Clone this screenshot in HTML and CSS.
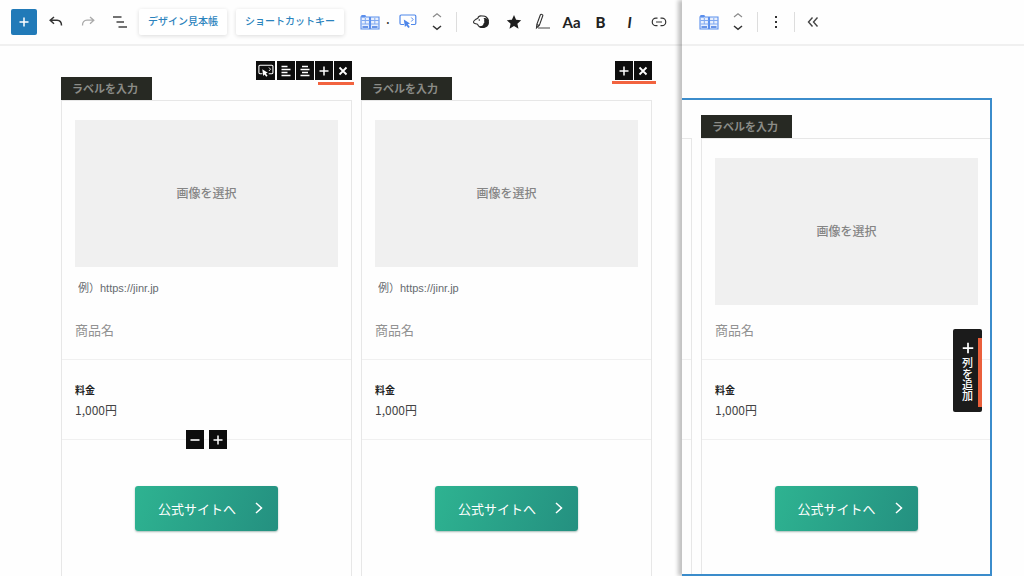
FILE: index.html
```html
<!DOCTYPE html>
<html lang="ja">
<head>
<meta charset="utf-8">
<title>比較表ブロック</title>
<link rel="stylesheet" href="styles.css">
</head>
<body>
<svg class="sprite" aria-hidden="true">
  <symbol id="i-table" viewBox="0 0 20 16"><path d="M1 15V3l1-1.500h3L6 3h3.500v12zM10.500 15V3H19v12z" fill="#e9f0fd" stroke="#5b8fec" stroke-width="1.100"/><path d="M1.500 2h3.800v1.600H1.500z" fill="#5b8fec"/><path d="M1.500 6.500h8M1.500 10h8M11 6.500h8M11 10h8M5.300 4v6M14.800 4v6" fill="none" stroke="#7fa8f1" stroke-width="1"/><path d="M2.500 13h5.500M12 13h5.500" fill="none" stroke="#3f76df" stroke-width="1.500"/></symbol>
  <symbol id="i-click" viewBox="0 0 18 15"><path d="M5 10.500H2.200A1.200 1.200 0 0 1 1 9.300V2.200A1.200 1.200 0 0 1 2.200 1h13.400a1.200 1.200 0 0 1 1.200 1.200v7.100a1.200 1.200 0 0 1-1.200 1.200H12" fill="none" stroke="currentColor" stroke-width="1.200"/><path d="M12.300 3.500l1.800 2-1.800 2" fill="none" stroke="currentColor"/><path d="M4.800 5.500l6.200 4-2.200.8 2 2.600-1.500 1.100-1.900-2.600-1.500 1.700z" class="pointer"/></symbol>
  <symbol id="i-mover" viewBox="0 0 12 20"><path d="M2 5l4-3.300L10 5" fill="none" stroke="#8b8b8b" stroke-width="1.200"/><path d="M2 14l4 3.300 4-3.300" fill="none" stroke="#333" stroke-width="1.500"/></symbol>
  <symbol id="i-plus" viewBox="0 0 12 12"><path d="M6 1.500v9M1.500 6h9" fill="none" stroke="currentColor" stroke-width="1.500"/></symbol>
  <symbol id="i-minus" viewBox="0 0 12 12"><path d="M1.500 6h9" fill="none" stroke="currentColor" stroke-width="1.600"/></symbol>
  <symbol id="i-close" viewBox="0 0 12 12"><path d="M2.500 2.500l7 7M9.500 2.500l-7 7" fill="none" stroke="currentColor" stroke-width="1.800"/></symbol>
  <symbol id="i-left" viewBox="0 0 12 12"><path d="M1.500 1.500h6M1.500 4.500h9M1.500 7.500h6M1.500 10.500h9" fill="none" stroke="currentColor" stroke-width="1.300"/></symbol>
  <symbol id="i-center" viewBox="0 0 12 12"><path d="M3 1.500h6M1.500 4.500h9M3 7.500h6M1.500 10.500h9" fill="none" stroke="currentColor" stroke-width="1.300"/></symbol>
  <symbol id="i-next" viewBox="0 0 10 14"><path d="M2 2l5.500 5L2 12" fill="none" stroke="currentColor" stroke-width="1.500"/></symbol>
</svg>

<div class="screen">
  <section class="pane">
    <header class="toolbar">
      <button class="inserter" aria-label="ブロックを追加"><svg width="12" height="12"><use href="#i-plus"/></svg></button>
      <button class="tool tool-first" aria-label="元に戻す"><svg width="16" height="14" viewBox="0 0 16 14"><path d="M6 2L2.200 5.200 6 8.700M2.500 5.200H9c3 0 4.500 2 4.500 5.300" fill="none" stroke="#333" stroke-width="1.500"/></svg></button>
      <button class="tool" aria-label="やり直す"><svg width="16" height="14" viewBox="0 0 16 14"><path d="M10 2l3.800 3.200L10 8.700M13.500 5.200H7c-3 0-4.500 2-4.500 5.300" fill="none" stroke="#aaa" stroke-width="1.300"/></svg></button>
      <button class="tool" aria-label="文書の概観"><svg width="16" height="14" viewBox="0 0 16 14"><path d="M1 2h8.500M4.500 7h7.500M6.500 12h8.500" fill="none" stroke="#444" stroke-width="1.500"/></svg></button>
      <button class="chip chip-first">デザイン見本帳</button>
      <button class="chip">ショートカットキー</button>
      <button class="tool tool-block" aria-label="比較表"><svg width="20" height="16"><use href="#i-table"/></svg></button>
      <span class="dot">·</span>
      <button class="tool tool-click" aria-label="ボタン"><svg width="18" height="15"><use href="#i-click"/></svg></button>
      <button class="tool tool-mover" aria-label="移動"><svg width="12" height="20"><use href="#i-mover"/></svg></button>
      <span class="divider"></span>
      <button class="tool tool-wide" aria-label="装飾"><svg width="18" height="16" viewBox="0 0 18 16"><path d="M10 2C7.500 1.500 6.300 2.500 5.800 4.300 4 5.200 1.600 6.800 1.500 8c0 1.500 2.500 2 4 2.200.8 2 3 3.300 5 3.300" fill="none" stroke="#333" stroke-width="1.100"/><path d="M10 2c3.500-.5 6.300 2 6.500 5.500" fill="none" stroke="#222" stroke-width="1.100"/><path d="M11.500 4.200c3-.5 5.500 1.500 5.500 4.300 0 3-2.500 5.500-6 5.500-1.800 0-3.300-.8-4-1.800 2.800.3 4.600-.9 4.500-2.700 1-.6 1.200-1.700.5-2.500.6-1.200.4-2.200-.5-2.800z" fill="#222"/><circle cx="7.300" cy="6" r=".8" fill="#222"/></svg></button>
      <button class="tool tool-format" aria-label="お気に入り"><svg width="16" height="16" viewBox="0 0 16 16"><path d="M8 1l2.100 4.700 5.100.5-3.800 3.500 1.100 5L8 12.100l-4.500 2.600 1.100-5L.8 6.200l5.100-.5z" fill="#1e1e1e"/></svg></button>
      <button class="tool tool-format" aria-label="マーカー"><svg width="16" height="17" viewBox="0 0 16 17"><path d="M1.800 11.500L5.300 2c.3-.7 1-.9 1.700-.6.800.3 1 .9.700 1.600L4.300 12.500 1.500 15zM1.800 11.500l2.500 1" fill="none" stroke="#333" stroke-width="1.100"/><path d="M3 15H15" fill="none" stroke="#555" stroke-width="1.100"/></svg></button>
      <button class="tool tool-format glyph">Aa</button>
      <button class="tool tool-format glyph heavy">B</button>
      <button class="tool tool-format glyph slanted">I</button>
      <button class="tool tool-format" aria-label="リンク"><svg width="16" height="12" viewBox="0 0 16 12"><path d="M6.500 2.200H5a3.700 3.700 0 0 0 0 7.500h1.500M9.500 2.200H11a3.700 3.700 0 0 1 0 7.500H9.500M5 6h6" fill="none" stroke="#333" stroke-width="1.200"/></svg></button>
    </header>
    <main class="columns">
      <article class="column">
        <div class="column-head">
          <input class="label" aria-label="ラベル" placeholder="ラベルを入力">
          <div class="actions">
            <button class="square square-first" aria-label="ボタン"><svg width="16" height="14"><use href="#i-click"/></svg></button>
            <button class="square" aria-label="左揃え"><svg width="12" height="12"><use href="#i-left"/></svg></button>
            <button class="square" aria-label="中央揃え"><svg width="12" height="12"><use href="#i-center"/></svg></button>
            <div class="marked">
              <button class="square" aria-label="列を追加"><svg width="12" height="12"><use href="#i-plus"/></svg></button>
              <button class="square" aria-label="列を削除"><svg width="12" height="12"><use href="#i-close"/></svg></button>
            </div>
          </div>
        </div>
        <div class="card">
          <div class="product">
            <button class="picker">画像を選択</button>
            <input class="url" aria-label="リンク先" placeholder="例）https://jinr.jp">
            <input class="name" aria-label="商品名" placeholder="商品名">
          </div>
          <div class="price">
            <h3>料金</h3>
            <p>1,000円</p>
            <div class="rows">
              <button class="square" aria-label="行を削除"><svg width="12" height="12"><use href="#i-minus"/></svg></button>
              <button class="square" aria-label="行を追加"><svg width="12" height="12"><use href="#i-plus"/></svg></button>
            </div>
          </div>
          <div class="action"><a class="cta" href="#">公式サイトへ<svg width="10" height="14"><use href="#i-next"/></svg></a></div>
        </div>
      </article>
      <article class="column">
        <div class="column-head">
          <input class="label" aria-label="ラベル" placeholder="ラベルを入力">
          <div class="actions">
            <div class="marked marked-wide">
              <button class="square" aria-label="列を追加"><svg width="12" height="12"><use href="#i-plus"/></svg></button>
              <button class="square" aria-label="列を削除"><svg width="12" height="12"><use href="#i-close"/></svg></button>
            </div>
          </div>
        </div>
        <div class="card">
          <div class="product">
            <button class="picker">画像を選択</button>
            <input class="url" aria-label="リンク先" placeholder="例）https://jinr.jp">
            <input class="name" aria-label="商品名" placeholder="商品名">
          </div>
          <div class="price">
            <h3>料金</h3>
            <p>1,000円</p>
          </div>
          <div class="action"><a class="cta" href="#">公式サイトへ<svg width="10" height="14"><use href="#i-next"/></svg></a></div>
        </div>
      </article>
    </main>
  </section>

  <section class="pane pane-side">
    <header class="toolbar">
      <button class="tool" aria-label="比較表"><svg width="20" height="16"><use href="#i-table"/></svg></button>
      <button class="tool tool-mover" aria-label="移動"><svg width="12" height="20"><use href="#i-mover"/></svg></button>
      <span class="divider"></span>
      <button class="tool tool-small" aria-label="オプション"><svg width="4" height="14" viewBox="0 0 4 14"><path d="M1 1h2v2H1zM1 6h2v2H1zM1 11h2v2H1z" fill="#333"/></svg></button>
      <span class="divider"></span>
      <button class="tool tool-small" aria-label="折りたたむ"><svg width="12" height="12" viewBox="0 0 12 12"><path d="M5.500 1.500L1.500 6l4 4.500M10.500 1.500l-4 4.500 4 4.500" fill="none" stroke="#444" stroke-width="1.400"/></svg></button>
    </header>
    <div class="selection">
      <div class="neighbour">
        <div class="neighbour-product"></div>
        <div class="neighbour-price"></div>
      </div>
      <article class="column">
        <div class="column-head">
          <input class="label" aria-label="ラベル" placeholder="ラベルを入力">
        </div>
        <div class="card">
          <div class="product">
            <button class="picker">画像を選択</button>
            <input class="name" aria-label="商品名" placeholder="商品名">
          </div>
          <div class="price">
            <h3>料金</h3>
            <p>1,000円</p>
          </div>
          <div class="action"><a class="cta" href="#">公式サイトへ<svg width="10" height="14"><use href="#i-next"/></svg></a></div>
        </div>
      </article>
      <button class="add-column"><svg width="14" height="14"><use href="#i-plus"/></svg><span>列を追加</span></button>
    </div>
  </section>
</div>
</body>
</html>
```

FILE: styles.css
```css
* {
  box-sizing: border-box;
}

body {
  margin: 0;
  overflow: hidden;
  background: #fefefe;
  color: #333;
  font-family: "Noto Sans CJK JP", sans-serif;
}

button,
input {
  margin: 0;
  padding: 0;
  border: 0;
  background: none;
  color: inherit;
  font-family: inherit;
}

.sprite {
  position: absolute;
  width: 0;
  height: 0;
}

.screen {
  display: flex;
  height: 100vh;
}

.pane {
  display: flex;
  flex: 1;
  flex-direction: column;
  min-width: 0;
}

.pane-side {
  flex: 0 0 342px;
  position: relative;
  background: #fefefe;
  box-shadow: -4px 0 4px rgba(0, 0, 0, 0.24);
}

/* Toolbar */

.toolbar {
  display: flex;
  flex: none;
  align-items: center;
  height: 46px;
  padding: 0 0 1px 11px;
  border-bottom: 2px solid #f0f0f0;
}

.inserter {
  display: flex;
  align-items: center;
  justify-content: center;
  width: 26px;
  height: 26px;
  border-radius: 2px;
  background: #217ab8;
  color: #fff;
}

.tool {
  display: flex;
  flex: none;
  align-items: center;
  justify-content: center;
  width: 32px;
  height: 32px;
}

.tool-first {
  margin-left: 3px;
}

.tool-block {
  margin-left: 10px;
}

.tool-click {
  margin-left: 2px;
  color: #4f87ea;
}

.tool-mover {
  width: 26px;
}

.tool-wide {
  width: 36px;
}

.tool-format {
  width: 29px;
}

.tool-small {
  width: 24px;
}

.pointer {
  fill: currentColor;
}

.glyph {
  color: #222;
  font-family: Lato, sans-serif;
  font-size: 15px;
  font-weight: 700;
}

.heavy {
  font-weight: 900;
}

.slanted {
  font-style: italic;
}

.chip {
  height: 26px;
  margin-left: 9px;
  padding: 0 9px 2px;
  border-radius: 2px;
  background: #fff;
  box-shadow: 0 1px 4px rgba(0, 0, 0, 0.14);
  color: #2b83bd;
  font-size: 10px;
  font-weight: 500;
  white-space: nowrap;
}

.chip-first {
  margin-left: 3px;
}

.dot {
  width: 4px;
  font-size: 14px;
  line-height: 20px;
  display: flex;
  justify-content: center;
}

.divider {
  width: 1px;
  height: 20px;
  margin: 0 6px;
  background: #ddd;
}

/* Comparison columns */

.columns {
  display: flex;
  flex: 1;
  gap: 9px;
  padding: 15px 30px 0 61px;
}

.column {
  display: flex;
  flex: 1;
  flex-direction: column;
  min-width: 0;
}

.column-head {
  display: flex;
  justify-content: space-between;
  height: 39px;
}

.label {
  align-self: flex-end;
  width: 91px;
  height: 23px;
  padding: 0 11px 1px;
  background: #272923;
  font-size: 11px;
  font-weight: 700;
}

.label::placeholder {
  color: #8b8c87;
  opacity: 1;
}

.actions,
.marked {
  display: flex;
  align-items: flex-start;
  gap: 1px;
}

.marked {
  position: relative;
}

.marked::after {
  position: absolute;
  top: 21px;
  right: -2px;
  left: 3px;
  height: 3px;
  background: #f2633f;
  content: "";
}

.marked-wide::after {
  top: 20px;
  right: -4px;
  left: -3px;
}

.square {
  display: flex;
  align-items: center;
  justify-content: center;
  width: 18px;
  height: 19px;
  background: #0d0d0d;
  color: #fff;
}

.square-first {
  width: 19px;
  margin-right: 1px;
}

.card {
  flex: 1;
  border: 1px solid #e7e7e7;
  border-bottom: 0;
}

.product {
  display: flex;
  flex-direction: column;
  padding: 19px 13px;
  border-bottom: 1px solid #f0f0f0;
}

.picker {
  height: 147px;
  padding-bottom: 2px;
  background: #f0f0f0;
  color: #858585;
  font-size: 12px;
  font-weight: 500;
}

.url {
  width: 100%;
  height: 20px;
  margin-top: 12px;
  padding: 0 3px 2px;
  font-family: "Liberation Sans", "Noto Sans CJK JP", sans-serif;
  font-size: 11px;
}

.url::placeholder {
  color: #666b70;
  opacity: 1;
}

.name {
  width: 100%;
  height: 20px;
  margin-top: 21px;
  padding-bottom: 2px;
  font-size: 13px;
}

.name::placeholder {
  color: #929292;
  opacity: 1;
}

.price {
  position: relative;
  padding: 22px 13px 19px;
  border-bottom: 1px solid #f0f0f0;
}

.price h3 {
  margin: 0 0 2px;
  color: #222;
  font-size: 10px;
  font-weight: 700;
  line-height: 16px;
}

.price p {
  margin: 0;
  color: #444;
  font-size: 12px;
  line-height: 20px;
}

.rows {
  position: absolute;
  bottom: -10px;
  left: 0;
  display: flex;
  justify-content: center;
  gap: 5px;
  width: 100%;
}

.action {
  display: flex;
  justify-content: center;
  padding: 46px 13px 20px;
}

.cta {
  display: flex;
  align-items: center;
  justify-content: space-between;
  width: 143px;
  height: 45px;
  padding: 0 14px 1px 23px;
  border-radius: 3px;
  background: linear-gradient(110deg, #2eb391, #249080);
  box-shadow: 0 1px 2px rgba(0, 60, 50, 0.35);
  color: #fff;
  font-size: 13px;
  text-decoration: none;
}

/* Selected block in the side pane */

.selection {
  position: relative;
  display: flex;
  flex: 1;
  gap: 9px;
  margin: 52px 32px 0 0;
  border: 2px solid #3b8ccb;
  border-left: 0;
}

.selection .column-head {
  height: 38px;
}

.selection .card {
  border-right: 0;
}

.selection .product {
  padding-right: 12px;
}

.selection .name {
  margin-top: 15px;
}

.neighbour {
  width: 10px;
  margin-top: 38px;
  border: 1px solid #e7e7e7;
  border-width: 1px 1px 0 0;
}

.neighbour-product {
  height: 221px;
  border-bottom: 1px solid #f0f0f0;
}

.neighbour-price {
  height: 80px;
  border-bottom: 1px solid #f0f0f0;
}

.add-column {
  position: absolute;
  top: 229px;
  right: 8px;
  display: flex;
  flex-direction: column;
  align-items: center;
  justify-content: center;
  gap: 2px;
  width: 29px;
  height: 83px;
  border-radius: 2px;
  background: #1b1b1b;
  color: #fff;
  font-size: 11px;
  font-weight: 500;
}

.add-column span {
  writing-mode: vertical-rl;
}

.add-column::after {
  position: absolute;
  top: 9px;
  right: 0;
  width: 4px;
  height: 69px;
  background: #ea5f3b;
  content: "";
}
```
